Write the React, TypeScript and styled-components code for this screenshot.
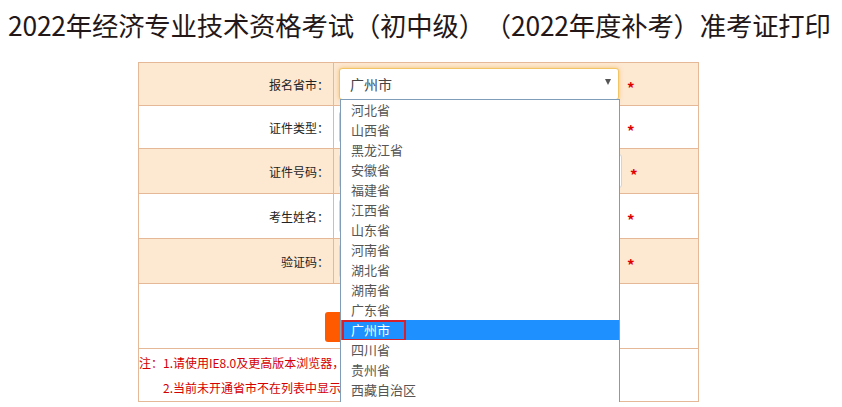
import styled, { createGlobalStyle } from "styled-components"

const GlobalStyle = createGlobalStyle`
    html, body {
        overflow: hidden;
    }
    body {
        margin: 8px;
        background: #fff;
        font-family: "Noto Sans CJK SC", "Noto Sans", sans-serif;
        color: #333;
    }
`

const provinces = [
    "河北省", "山西省", "黑龙江省", "安徽省", "福建省", "江西省", "山东省", "河南省",
    "湖北省", "湖南省", "广东省", "广州市", "四川省", "贵州省", "西藏自治区", "重庆市",
]

export default function App() {
    return (
        <>
            <GlobalStyle />
            <Title>2022年经济专业技术资格考试（初中级）（2022年度补考）准考证打印</Title>
            <FormTable>
                <Row $shade>
                    <Label>报名省市：</Label>
                    <Field>
                        <SelectWrap>
                            <Select $focused>
                                <span>广州市</span>
                                <Arrow />
                            </Select>
                            <DropList>
                                {provinces.map(p => (
                                    <Option key={p} $active={p === "广州市"}>
                                        {p}
                                        {p === "广州市" && <Marker />}
                                    </Option>
                                ))}
                            </DropList>
                        </SelectWrap>
                        <Star>*</Star>
                    </Field>
                </Row>
                <Row>
                    <Label>证件类型：</Label>
                    <Field>
                        <Select><span>身份证</span><Arrow /></Select>
                        <Star>*</Star>
                    </Field>
                </Row>
                <Row $shade $tall>
                    <Label>证件号码：</Label>
                    <Field>
                        <Input $wide />
                        <Star>*</Star>
                    </Field>
                </Row>
                <Row $tall>
                    <Label>考生姓名：</Label>
                    <Field>
                        <Input />
                        <Star>*</Star>
                    </Field>
                </Row>
                <Row $shade $tall>
                    <Label>验证码：</Label>
                    <Field>
                        <Input />
                        <Star>*</Star>
                    </Field>
                </Row>
                <ButtonRow>
                    <PrintButton>打印准考证</PrintButton>
                </ButtonRow>
                <Notes>
                    <p>注：1.请使用IE8.0及更高版本浏览器，其他浏览器可能无法正常打印。</p>
                    <p className="indent">2.当前未开通省市不在列表中显示。</p>
                </Notes>
            </FormTable>
        </>
    )
}

const Title = styled.h1`
    margin: 0 0 20px 0;
    font-size: 26.4px;
    line-height: 34px;
    font-weight: 400;
    color: #241717;
    white-space: nowrap;
    letter-spacing: -0.2px;
    text-spacing-trim: space-all;
    font-feature-settings: "halt" 0, "chws" 0;
`

const FormTable = styled.div`
    width: 559px;
    margin-left: 130px;
    border: 1px solid #e5b897;
    border-bottom: none;
`

const Row = styled.div<{ $shade?: boolean; $tall?: boolean }>`
    display: grid;
    grid-template-columns: 195px 1fr;
    height: ${p => (p.$tall ? 44 : 42)}px;
    background: ${p => (p.$shade ? "#fde8d2" : "#fff")};
    border-bottom: 1px solid #e5b897;
`

const Label = styled.div`
    display: flex;
    align-items: center;
    justify-content: flex-end;
    padding-right: 4px;
    border-right: 1px solid #e5b897;
    font-size: 12px;
    color: #222;
`

const Field = styled.div`
    display: flex;
    align-items: center;
    padding-left: 5px;
`

const SelectWrap = styled.div`
    position: relative;
`

const Select = styled.div<{ $focused?: boolean }>`
    box-sizing: border-box;
    width: 280px;
    height: 32px;
    display: flex;
    align-items: center;
    justify-content: space-between;
    padding: 0 7px 0 10px;
    background: #fff;
    border: 1px solid ${p => (p.$focused ? "#f2c464" : "#ccc")};
    border-radius: 3px;
    box-shadow: ${p => (p.$focused ? "0 0 4px rgba(240, 180, 70, 0.7)" : "none")};
    font-size: 14px;
    color: #444;
`

const Arrow = styled.span`
    width: 0;
    height: 0;
    margin-top: -4px;
    border-left: 3.5px solid transparent;
    border-right: 3.5px solid transparent;
    border-top: 6px solid #555;
`

const Input = styled.div<{ $wide?: boolean }>`
    box-sizing: border-box;
    width: ${p => (p.$wide ? 283 : 280)}px;
    height: 34px;
    background: #fff;
    border: 1px solid #d4d4d4;
    border-radius: 3px;
`

const Star = styled.span`
    margin-left: 8px;
    margin-top: 7px;
    font-size: 15px;
    font-weight: 700;
    line-height: 1;
    color: #e00000;
`

const DropList = styled.ul`
    position: absolute;
    left: 1px;
    top: 31px;
    z-index: 10;
    box-sizing: border-box;
    width: 280px;
    margin: 0;
    padding: 0;
    list-style: none;
    background: #fff;
    border: 1px solid #7f9db9;
`

const Option = styled.li<{ $active?: boolean }>`
    position: relative;
    height: 20px;
    line-height: 20px;
    padding-left: 10px;
    font-size: 13px;
    color: ${p => (p.$active ? "#fff" : "#555")};
    background: ${p => (p.$active ? "#1e90ff" : "#fff")};
`

const Marker = styled.span`
    position: absolute;
    left: 1px;
    top: 0;
    box-sizing: border-box;
    width: 64px;
    height: 21px;
    border: 2px solid #d3222e;
`

const ButtonRow = styled.div`
    height: 65px;
    display: flex;
    justify-content: center;
    align-items: flex-start;
    padding-top: 28px;
    box-sizing: border-box;
    border-bottom: 1px solid #e5b897;
`

const PrintButton = styled.button`
    width: 188px;
    height: 30px;
    border: none;
    border-radius: 3px;
    background: #ff5a00;
    color: #fff;
    font-family: "Noto Sans CJK SC", sans-serif;
    font-size: 14px;
`

const Notes = styled.div`
    height: 53px;
    box-sizing: border-box;
    padding-top: 1px;
    border-bottom: 1px solid #e5b897;
    overflow: hidden;
    p {
        margin: 0;
        font-size: 12px;
        line-height: 25px;
        color: #d40000;
        white-space: nowrap;
        font-family: "Noto Sans CJK SC", sans-serif;
    }
    .indent {
        padding-left: 24px;
    }
`
